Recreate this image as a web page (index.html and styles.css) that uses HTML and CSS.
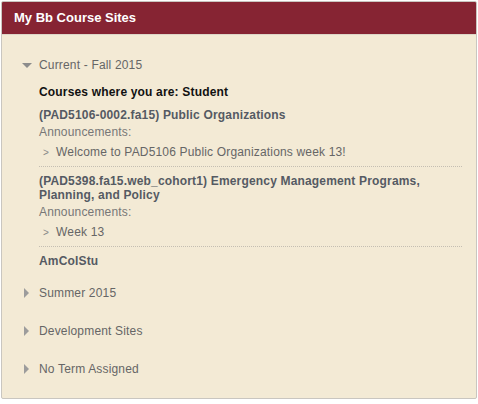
FILE: index.html
```html
<!DOCTYPE html>
<html>
<head>
<meta charset="utf-8">
<link rel="stylesheet" href="styles.css">
</head>
<body>
<div class="panel">
  <div class="header">My Bb Course Sites</div>
  <div class="body">
    <div class="term open">
      <div class="term-title"><span class="tri-down"></span>Current - Fall 2015</div>
      <div class="term-content">
        <div class="role">Courses where you are: Student</div>
        <div class="course">
          <div class="course-title">(PAD5106-0002.fa15) Public Organizations</div>
          <div class="ann-label">Announcements:</div>
          <div class="ann-item"><span class="chev">&gt;</span>Welcome to PAD5106 Public Organizations week 13!</div>
        </div>
        <div class="course">
          <div class="course-title">(PAD5398.fa15.web_cohort1) Emergency Management Programs, Planning, and Policy</div>
          <div class="ann-label">Announcements:</div>
          <div class="ann-item"><span class="chev">&gt;</span>Week 13</div>
        </div>
        <div class="course last">
          <div class="course-title">AmColStu</div>
        </div>
      </div>
    </div>
    <div class="term"><div class="term-title"><span class="tri-right"></span>Summer 2015</div></div>
    <div class="term"><div class="term-title"><span class="tri-right"></span>Development Sites</div></div>
    <div class="term"><div class="term-title"><span class="tri-right"></span>No Term Assigned</div></div>
  </div>
</div>
</body>
</html>
```
FILE: styles.css
```css
html, body { margin: 0; padding: 0; background: #fff; }
body { padding: 1px; font-family: "Liberation Sans", Arial, sans-serif; }
.panel {
  width: 474px;
  height: 396px;
  border: 1px solid #c9c6c0;
  border-radius: 2px;
  background: #f3ead5;
  overflow: hidden;
}
.header {
  background: #862433;
  color: #fff;
  font-weight: bold;
  font-size: 13px;
  height: 32px;
  line-height: 32px;
  padding-left: 12px;
  border-bottom: 1px solid #ddd6c8;
}
.body { padding: 18px 0 0 18px; letter-spacing: 0.17px; }
.term-title {
  display: flex;
  align-items: center;
  font-size: 12px;
  color: #666;
  height: 24px;
}
.tri-down {
  width: 0; height: 0;
  border-left: 5px solid transparent;
  border-right: 5px solid transparent;
  border-top: 5px solid #8c8c8c;
  margin: 0 7px 0 2px;
}
.tri-right {
  width: 0; height: 0;
  border-top: 5px solid transparent;
  border-bottom: 5px solid transparent;
  border-left: 5px solid #9c9c9c;
  margin: 0 10px 0 4px;
}
.term { margin-bottom: 14px; }
.term.open { margin-bottom: 13px; }
.term-content { padding: 8px 14px 0 19px; }
.role { font-size: 12px; font-weight: bold; color: #111; line-height: 15px; margin-bottom: 8px; }
.course { border-bottom: 1px dotted #c4beb2; padding-bottom: 6px; margin-bottom: 7px; }
.course.last { border-bottom: none; margin-bottom: 0; padding-bottom: 0; }
.course-title { font-size: 12px; font-weight: bold; color: #555a63; line-height: 14px; }
.ann-label { font-size: 12px; color: #777; line-height: 15px; margin-top: 3px; }
.ann-item { font-size: 12px; color: #666; line-height: 15px; margin-top: 5px; padding-left: 4px; }
.chev { font-size: 10px; color: #888; margin-right: 7px; }
```
